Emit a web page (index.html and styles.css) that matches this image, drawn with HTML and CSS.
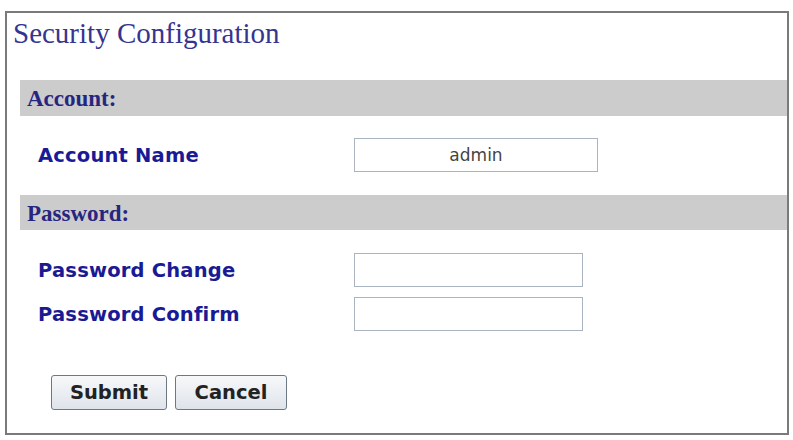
FILE: index.html
```html
<!DOCTYPE html>
<html lang="en">
<head>
    <meta charset="UTF-8">
    <title>Security Configuration</title>
    <link rel="stylesheet" href="styles.css">
</head>
<body>
    <form class="panel">
        <h1 class="title">Security Configuration</h1>

        <div class="section-head">Account:</div>
        <div class="row">
            <label class="label" for="account">Account Name</label>
            <input class="field field-wide" id="account" type="text" value="admin">
        </div>

        <div class="section-head section-pw">Password:</div>
        <div class="row">
            <label class="label" for="pw1">Password Change</label>
            <input class="field" id="pw1" type="password">
        </div>
        <div class="row row-tight">
            <label class="label" for="pw2">Password Confirm</label>
            <input class="field" id="pw2" type="password">
        </div>

        <div class="actions">
            <button class="btn btn-submit" type="button">Submit</button>
            <button class="btn btn-cancel" type="button">Cancel</button>
        </div>
    </form>
</body>
</html>
```

FILE: styles.css
```css
body {
    margin: 0;
    background: #fff;
    font-family: "DejaVu Sans", Verdana, sans-serif;
}

.panel {
    box-sizing: border-box;
    width: 784px;
    height: 424px;
    margin: 11px 0 0 5px;
    border: 2px solid #7a7a7a;
}

.title {
    margin: 0;
    padding: 3px 0 0 6px;
    font-family: "Liberation Serif", "Times New Roman", serif;
    font-weight: normal;
    font-size: 29px;
    line-height: 34px;
    color: #35358f;
}

.section-head {
    margin: 30px 0 0 13px;
    height: 36px;
    padding: 1px 0 0 7px;
    box-sizing: border-box;
    background: #cccccc;
    font-family: "Liberation Serif", "Times New Roman", serif;
    font-weight: bold;
    font-size: 23px;
    line-height: 35px;
    color: #262680;
}

.section-pw {
    margin-top: 23px;
    height: 35px;
}

.row {
    display: flex;
    align-items: center;
    margin-top: 22px;
    padding-left: 31px;
}

.section-pw + .row {
    margin-top: 23px;
}

.row-tight {
    margin-top: 10px;
}

.label {
    width: 316px;
    font-weight: bold;
    font-size: 19.5px;
    letter-spacing: 0.2px;
    color: #1a1a94;
}

.field {
    box-sizing: border-box;
    width: 229px;
    height: 34px;
    margin: 0;
    padding: 0 6px;
    border: 1px solid #a9b4c0;
    background: #fff;
    font-family: "DejaVu Sans", Verdana, sans-serif;
    font-size: 17px;
    color: #444;
    text-align: center;
}

.field-wide {
    width: 244px;
}

.actions {
    display: flex;
    gap: 8px;
    margin-top: 44px;
    padding-left: 44px;
}

.btn {
    box-sizing: border-box;
    height: 35px;
    padding: 0;
    border: 1px solid #6d7885;
    border-radius: 3px;
    background: linear-gradient(#f7f8fa, #dfe4ea);
    font-family: "DejaVu Sans", Verdana, sans-serif;
    font-weight: bold;
    font-size: 19.5px;
    color: #222;
}

.btn-submit {
    width: 116px;
}

.btn-cancel {
    width: 112px;
}
```
